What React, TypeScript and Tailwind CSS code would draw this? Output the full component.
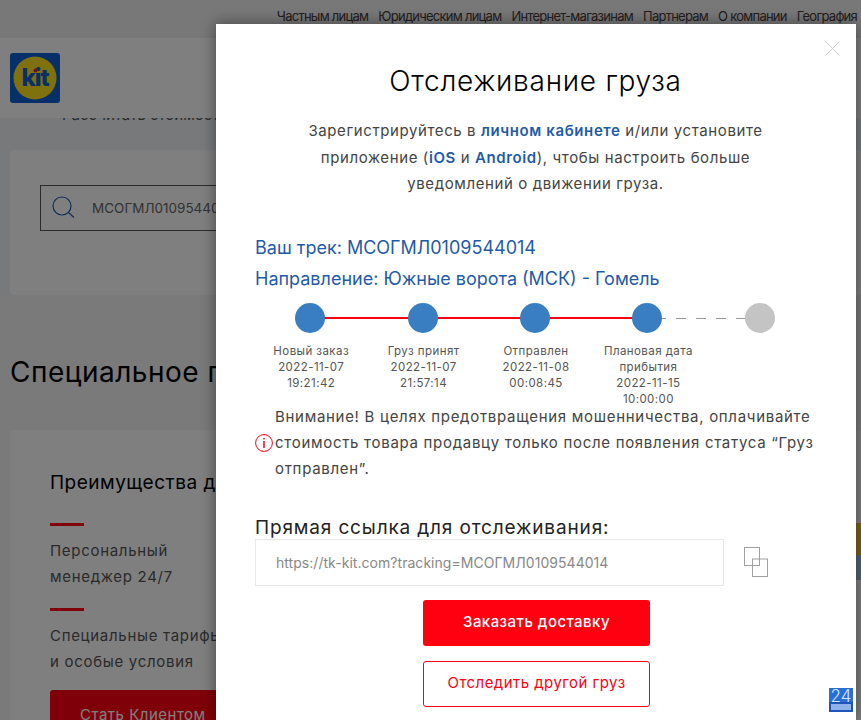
const topLinks = ["Частным лицам", "Юридическим лицам", "Интернет-магазинам", "Партнерам", "О компании", "География"];

const steps = [
    { label: ["Новый заказ"], date: "2022-11-07", time: "19:21:42", done: true },
    { label: ["Груз принят"], date: "2022-11-07", time: "21:57:14", done: true },
    { label: ["Отправлен"], date: "2022-11-08", time: "00:08:45", done: true },
    { label: ["Плановая дата", "прибытия"], date: "2022-11-15", time: "10:00:00", done: true },
    { label: [], date: "", time: "", done: false },
];

function Logo() {
    return (
        <svg width="50" height="50" viewBox="0 0 50 50">
            <rect width="50" height="50" rx="3" fill="#0f5fd0" />
            <circle cx="25" cy="25" r="21.5" fill="#fde21c" />
            <text x="25" y="33" textAnchor="middle" fontFamily="Inter, sans-serif" fontWeight="800" fontSize="24" letterSpacing="-1" fill="#0f5fd0">kit</text>
            <circle cx="25.5" cy="17.5" r="2" fill="#e02020" />
        </svg>
    );
}

function Background() {
    return (
        <div className="relative h-[720px] overflow-hidden bg-[#f4f4f4] text-[#333]">
            <div className="h-[38px] bg-[#f0f1f3] flex justify-end items-end gap-[10px] pr-[4px] pb-[14px] text-[13px] leading-[16px] tracking-[-0.75px] text-[#4a3a3a] whitespace-nowrap">
                {topLinks.map((l) => (
                    <span key={l}>{l}</span>
                ))}
            </div>
            <div className="relative h-[80px] bg-white flex items-center pl-[10px]">
                <Logo />
            </div>
            <div className="h-[177px] bg-[#eff2f6] pl-[10px] flex flex-col">
                <div className="-mt-[14px] pl-[52px] text-[15px] leading-[22px] text-[#555]">Рассчитать стоимость</div>
                <div className="mt-[24px] h-[145px] bg-white rounded-[4px] pl-[30px] pt-[35px]">
                    <div className="h-[46px] w-[400px] border border-[#555] flex items-center pl-[10px] gap-[17px]">
                        <svg width="24" height="24" viewBox="0 0 24 24" fill="none" stroke="#1f5ba8" strokeWidth="1.2">
                            <circle cx="11" cy="10" r="9" />
                            <path d="M17.5 16.5 L23 21.5" />
                        </svg>
                        <span className="text-[13.5px] text-[#666]">МСОГМЛ0109544014</span>
                    </div>
                </div>
            </div>
            <div className="pl-[10px] pt-[57px] text-[28px] leading-[40px] tracking-[0.5px] text-black whitespace-nowrap">Специальное предложение</div>
            <div className="ml-[10px] mt-[38px] h-[300px] bg-white rounded-[4px] pl-[40px] pt-[39px]">
                <div className="text-[19px] leading-[28px] tracking-[0.5px] text-black">Преимущества для клиентов</div>
                <div className="mt-[26px] w-[34px] h-[3px] bg-[#ff0010]" />
                <div className="mt-[12px] text-[15px] leading-[26px] tracking-[0.7px] text-[#555]">Персональный<br />менеджер 24/7</div>
                <div className="mt-[18px] w-[34px] h-[3px] bg-[#ff0010]" />
                <div className="mt-[12px] text-[15px] leading-[26px] tracking-[0.7px] text-[#555]">Специальные тарифы<br />и особые условия</div>
                <div className="mt-[15px] w-[220px] h-[46px] bg-[#ff0010] rounded-[3px] text-white text-[15px] tracking-[0.5px] pl-[30px] pt-[14px]">Стать Клиентом</div>
            </div>
            <div className="absolute right-0 top-[523px] w-[5px] h-[32px] bg-[#f0c040]" />
            <div className="absolute right-0 top-[555px] w-[5px] h-[25px] bg-[#a0c8e4]" />
        </div>
    );
}

function Stepper() {
    return (
        <div className="grid grid-cols-5 w-[562px]">
            {steps.map((s, i) => (
                <div key={i} className="relative flex flex-col items-center">
                    {i < 3 && <div className="absolute top-[14.5px] left-1/2 w-full h-[1.5px] bg-[#ff0010]" />}
                    {i === 3 && <div className="absolute top-[15px] left-1/2 w-full h-px bg-[repeating-linear-gradient(90deg,transparent_0_8px,#999_8px_18px,transparent_18px_20px)]" />}
                    <div className={`relative w-[30px] h-[30px] rounded-full -translate-x-[1px] ${s.done ? "bg-[#3a7ec2]" : "bg-[#c4c4c4]"}`} />
                    <div className="mt-[10px] text-[11.5px] leading-[16px] tracking-[0.43px] text-[#555] text-center">
                        {s.label.map((l) => (
                            <div key={l}>{l}</div>
                        ))}
                        <div>{s.date}</div>
                        <div>{s.time}</div>
                    </div>
                </div>
            ))}
        </div>
    );
}

function Modal() {
    return (
        <div className="absolute left-[216px] top-[24px] w-[640px] h-[696px] overflow-hidden bg-white shadow-[0_0_14px_rgba(0,0,0,0.45)] pl-[39px] pr-[40px]">
            <svg className="absolute right-[16px] top-[17px]" width="15" height="15" viewBox="0 0 15 15" stroke="#ccc" strokeWidth="1">
                <path d="M0.5 0.5 L14.5 14.5 M14.5 0.5 L0.5 14.5" />
            </svg>
            <h2 className="pt-[40px] text-[28px] leading-[34px] tracking-[0.75px] font-light text-black text-center">Отслеживание груза</h2>
            <p className="mt-[20px] text-[15px] leading-[26.5px] tracking-[0.6px] text-[#444] text-center">
                Зарегистрируйтесь в <b className="text-[#1f5ba8] font-semibold">личном кабинете</b> и/или установите<br />
                приложение (<b className="text-[#1f5ba8] font-semibold">iOS</b> и <b className="text-[#1f5ba8] font-semibold">Android</b>), чтобы настроить больше<br />
                уведомлений о движении груза.
            </p>
            <div className="mt-[34px] text-[18px] leading-[31px] text-[#1f5ba8]">
                <div>Ваш трек: МСОГМЛ0109544014</div>
                <div>Направление: Южные ворота (МСК) - Гомель</div>
            </div>
            <div className="mt-[9px]">
                <Stepper />
            </div>
            <div className="flex items-center gap-[2px] -mt-[3px]">
                <svg className="shrink-0" width="18" height="18" viewBox="0 0 18 18" fill="none" stroke="#ff0010">
                    <circle cx="9" cy="9" r="8.4" />
                    <path d="M9 4 V5.5 M9 7 V14" strokeWidth="1.5" />
                </svg>
                <p className="text-[15px] leading-[26px] tracking-[0.7px] text-[#444]">
                    Внимание! В целях предотвращения мошенничества, оплачивайте стоимость товара продавцу только после появления статуса “Груз отправлен”.
                </p>
            </div>
            <div className="mt-[34px] text-[19px] leading-[23px] tracking-[0.85px] text-[#222]">Прямая ссылка для отслеживания:</div>
            <div className="flex items-center gap-[20px]">
                <div className="w-[469px] h-[47px] border border-[#e8e8e8] flex items-center pl-[20px] text-[14px] tracking-[0.04px] text-[#888]">https://tk-kit.com?tracking=МСОГМЛ0109544014</div>
                <svg width="24" height="30" viewBox="0 0 24 30" fill="none" stroke="#a0a0a0" strokeWidth="1">
                    <rect x="0.5" y="0.5" width="15" height="18" />
                    <rect x="8.5" y="12" width="15" height="17.5" />
                </svg>
            </div>
            <div className="mt-[14px] flex flex-col items-center w-[563px]">
                <div className="w-[227px] h-[46px] rounded-[3px] bg-[#ff0010] flex items-center justify-center text-[15px] tracking-[0.45px] font-medium text-white">Заказать доставку</div>
                <div className="mt-[15px] w-[227px] h-[46px] rounded-[3px] border border-[#ff0010] flex items-center justify-center text-[15px] tracking-[0.45px] text-[#ff0010]">Отследить другой груз</div>
            </div>
        </div>
    );
}

export default function App() {
    return (
        <div className="relative h-[720px] w-full overflow-hidden font-['Inter',sans-serif]">
            <Background />
            <div className="absolute inset-0 bg-black/50" />
            <Modal />
            <div className="absolute left-[829px] top-[688px] w-[24px] h-[24px] bg-[linear-gradient(#2a6fd6_60%,#1d55b8_60%)] flex flex-col items-center">
                <span className="text-[17px] leading-[16px] font-light text-[#d5e4ff]">24</span>
                <span className="w-[20px] h-[6px] bg-[#8fb2ea]" />
            </div>
        </div>
    );
}
